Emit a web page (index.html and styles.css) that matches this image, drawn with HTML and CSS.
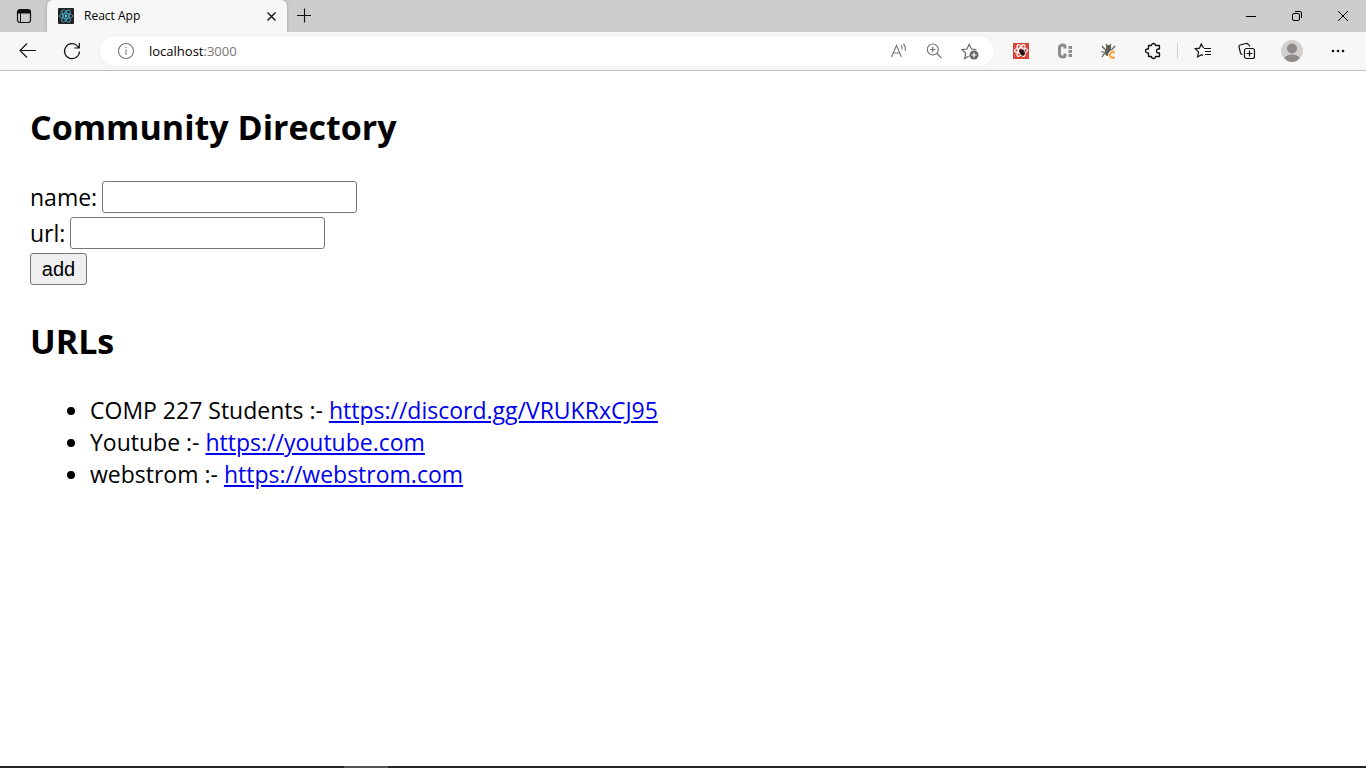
FILE: index.html
```html
<!DOCTYPE html>
<html lang="en">
<head>
<meta charset="utf-8">
<title>React App</title>
<link rel="stylesheet" href="styles.css">
</head>
<body>
<header class="browser">
  <div class="tabs">
    <button class="tab-actions" aria-label="Tab actions">
      <svg width="16" height="16" viewBox="0 0 16 16" fill="none" stroke="#111"><rect x="1.5" y="1.5" width="13" height="13" rx="2.5" stroke-width="1.2"/><path d="M2 3h12M2 4.5h12" stroke-width="2"/><path d="M4.5 5v9"/></svg>
    </button>
    <div class="tab">
      <svg width="16" height="16" viewBox="0 0 16 16" fill="none" stroke="#4fa9c0" stroke-width="0.9"><rect width="16" height="16" rx="1" fill="#222" stroke="none"/><ellipse cx="8" cy="8" rx="6.8" ry="2.6"/><ellipse cx="8" cy="8" rx="6.8" ry="2.6" transform="rotate(60 8 8)"/><ellipse cx="8" cy="8" rx="6.8" ry="2.6" transform="rotate(120 8 8)"/><circle cx="8" cy="8" r="1.3" fill="#61dafb" stroke="none"/></svg>
      <span class="tab-title">React App</span>
      <button class="tab-close" aria-label="Close tab"><svg width="16" height="16" viewBox="0 0 16 16" stroke="#111" stroke-width="1.4"><path d="M4.5 4.5l8 8M12.5 4.5l-8 8"/></svg></button>
    </div>
    <button class="new-tab" aria-label="New tab"><svg width="16" height="16" viewBox="0 0 16 16" stroke="#111" stroke-width="1.1"><path d="M1 7.500h14M8.500 0.500v14"/></svg></button>
    <div class="window-controls">
      <button aria-label="Minimize"><svg width="16" height="16" viewBox="0 0 16 16" stroke="#000"><path d="M3 8.500h10"/></svg></button>
      <button aria-label="Restore"><svg width="16" height="16" viewBox="0 0 16 16" fill="none" stroke="#000"><rect x="3.500" y="5.500" width="7" height="7" rx="1.500"/><path d="M6 3.500h5q1.500 0 1.500 1.500v5"/></svg></button>
      <button aria-label="Close"><svg width="16" height="16" viewBox="0 0 16 16" stroke="#000"><path d="M3 3l10 10M13 3L3 13"/></svg></button>
    </div>
  </div>
  <div class="toolbar">
    <button class="nav" aria-label="Back"><svg width="20" height="20" viewBox="0 0 20 20" fill="none" stroke="#111" stroke-width="1.1"><path d="M18 9.500H2.500M9 2.500l-7 7 7 7"/></svg></button>
    <button class="nav" aria-label="Refresh"><svg width="20" height="20" viewBox="0 0 20 20" fill="none" stroke="#111" stroke-width="1.200"><path d="M17.500 10.500a7.500 7.500 0 1 1-1.800-5.200l1.100 1.200M17.300 2v5h-5"/></svg></button>
    <div class="address">
      <svg width="18" height="18" viewBox="0 0 18 18" fill="none" stroke="#767676" stroke-width="1.100"><circle cx="9" cy="9" r="7.500"/><path d="M9 7.500v5.500M9 5v1.300"/></svg>
      <span class="url">localhost<span class="port">:3000</span></span>
      <button aria-label="Read aloud"><svg width="18" height="18" viewBox="0 0 18 18" fill="none" stroke="#767676" stroke-width="1.100"><path d="M1.500 15L6.500 3.500l5 11.500M3.200 11h6.600M11 3.500q1.500 1.500 1 4M13.500 2q2.800 3 1.500 7"/></svg></button>
      <button aria-label="Zoom"><svg width="18" height="18" viewBox="0 0 18 18" fill="none" stroke="#767676" stroke-width="1.200"><circle cx="7.800" cy="7.500" r="5.500"/><path d="M12 11.500l4.500 4.500M5 7.500h5.600M7.800 4.700v5.600"/></svg></button>
      <button aria-label="Add to favorites"><svg width="20" height="20" viewBox="0 0 20 20" fill="none" stroke="#666" stroke-width="1.200"><path d="M9 15l-4.300 2.500 1-5.200L2 8.700l5-.7 2.200-4.700L11.500 8l5 .7"/><circle cx="14" cy="14" r="4.500" fill="#666" stroke="none"/><path d="M11.500 14h5M14 11.500v5" stroke="#fff"/></svg></button>
    </div>
    <div class="tools">
      <button aria-label="React tools"><svg width="16" height="16" viewBox="0 0 16 16" fill="none" stroke="#fff" stroke-width="1.200"><rect width="16" height="16" fill="#dc4437" stroke="none"/><ellipse cx="8" cy="7.500" rx="6.500" ry="2.500"/><ellipse cx="8" cy="7.500" rx="6.500" ry="2.500" transform="rotate(60 8 7.500)"/><ellipse cx="8" cy="7.500" rx="6.500" ry="2.500" transform="rotate(120 8 7.500)"/><ellipse cx="9" cy="9.500" rx="2" ry="3.500" transform="rotate(-35 9 9.500)" fill="#24130f" stroke="none"/><path d="M7 9l4-2M8 12l4-3" stroke="#24130f"/></svg></button>
      <button aria-label="Colon extension"><svg width="16" height="16" viewBox="0 0 16 16" fill="none" stroke="#8c8c8c"><path d="M8 5.500V4a2 2 0 0 0-2-2h-.500a3 3 0 0 0-3 3v6a3 3 0 0 0 3 3H6a2 2 0 0 0 2-2v-1.500" stroke-width="3"/><path d="M11.500 4.500h3.500M11.500 8.500h3.500M11.500 12.500h3.500" stroke-width="2.800"/></svg></button>
      <button aria-label="Bug extension"><svg width="16" height="16" viewBox="0 0 16 16" fill="none" stroke="#5e5951" stroke-width="1.200"><path d="M5 1l1.500 2.500M10 1L8.500 3.500M1 3l2.500 3L6 7M14 3l-2.500 3L9 7M0 9h5M1 14l2-3 2-1M10 8h4"/><circle cx="7.500" cy="4.500" r="2" fill="#5e5951"/><ellipse cx="7" cy="9" rx="3" ry="4" fill="#5e5951" stroke="none"/><path d="M13.500 10a2.700 2.700 0 1 0 0 4" stroke="#f6f6f6" stroke-width="4"/><path d="M13.500 10a2.700 2.700 0 1 0 0 4" stroke="#ff981f" stroke-width="1.700"/></svg></button>
      <button aria-label="Extensions"><svg width="18" height="18" viewBox="0 0 18 18" fill="none" stroke="#111" stroke-width="1.300" stroke-linejoin="round"><path d="M4.500 3.500h3a2 2 0 0 1 4 0H15.500V7h-1a2 2 0 0 0 0 4h1v3.500h-4a2 2 0 0 1-4 0h-3V11h-1a2 2 0 0 1 0-4h1z"/></svg></button>
      <button class="divided" aria-label="Favorites"><svg width="18" height="18" viewBox="0 0 18 18" fill="none" stroke="#111" stroke-width="1.200"><path d="M9.500 6L7.200 2 5.500 6.200l-4.200.5 3.200 3.200-.8 5 3.800-2.200 1.500.8M10 6.500h7M11 9.500h6M11 12.500h6"/></svg></button>
      <button aria-label="Collections"><svg width="18" height="18" viewBox="0 0 18 18" fill="none" stroke="#111" stroke-width="1.200"><rect x="6.500" y="6.500" width="10" height="10" rx="2"/><path d="M11.500 8.500v6M8.500 11.500h6M4.500 12.500q-1.500 0-2-1.500L1 5q-.3-1.500 1-2l6-1.500q1.500-.3 2.300.8l1.700 2"/></svg></button>
      <button class="wide" aria-label="Profile"><svg width="22" height="22" viewBox="0 0 22 22" fill="#8d8a87"><circle cx="11" cy="11" r="11" fill="#d3d1cf"/><circle cx="11" cy="8.500" r="5"/><path d="M3.500 18q2-3.500 7.500-3.500t7.500 3.500Q15.500 22 11 22t-7.500-4z"/></svg></button>
      <button class="wide" aria-label="Settings and more"><svg width="16" height="16" viewBox="0 0 16 16" fill="#111"><circle cx="3" cy="8" r="1.300"/><circle cx="8" cy="8" r="1.300"/><circle cx="13" cy="8" r="1.300"/></svg></button>
    </div>
  </div>
</header>
<main class="page">
  <h2 class="heading">Community Directory</h2>
  <form class="entry">
    <div class="field"><label for="name">name:</label><input id="name" type="text"></div>
    <div class="field"><label for="url">url:</label><input id="url" type="text"></div>
    <button class="add" type="button">add</button>
  </form>
  <h2 class="heading">URLs</h2>
  <ul class="links">
    <li>COMP 227 Students :- <a href="https://discord.gg/VRUKRxCJ95">https://discord.gg/VRUKRxCJ95</a></li>
    <li>Youtube :- <a href="https://youtube.com">https://youtube.com</a></li>
    <li>webstrom :- <a href="https://webstrom.com">https://webstrom.com</a></li>
  </ul>
</main>
<footer class="taskbar"></footer>
</body>
</html>
```
FILE: styles.css
```css
* { box-sizing: border-box; }
body {
  margin: 0;
  min-height: 100vh;
  display: flex;
  flex-direction: column;
  background: #fff;
  color: #000;
  font-family: "Open Sans", "Noto Sans", sans-serif;
}
svg { display: block; flex: none; }
.browser { font-size: 12px; }
.browser button {
  display: flex;
  align-items: center;
  justify-content: center;
  padding: 0;
  border: 0;
  background: none;
}
.tabs {
  display: flex;
  height: 32px;
  background: #cdcdcd;
}
.tab-actions { width: 47px; }
.tab {
  display: flex;
  align-items: center;
  gap: 10px;
  width: 240px;
  padding: 0 8px 0 11px;
  background: #f7f7f7;
  border-radius: 6px 6px 0 0;
  box-shadow: 0 0 3px #999;
}
.tab-title { flex: 1; font-size: 12px; line-height: 16px; }
.new-tab { width: 34px; }
.window-controls { display: flex; margin-left: auto; }
.window-controls button { width: 46px; }
.toolbar {
  position: relative;
  display: flex;
  align-items: center;
  height: 39px;
  padding-left: 6px;
  background: #f7f7f7;
  border-bottom: 1px solid #bfbfbf;
}
.nav { width: 44px; height: 32px; }
.address {
  flex: 1;
  display: flex;
  align-items: center;
  gap: 17px;
  height: 30px;
  margin-left: 6px;
  padding: 0 14px 0 17px;
  border-radius: 15px;
  background: #fff;
  box-shadow: 0 0 3px #e8e8e8;
}
.url { flex: 1; margin-left: -3px; font-size: 13px; }
.port { color: #767676; }
.tools { display: flex; margin: 0 5px; }
.tools button { width: 44px; height: 32px; }
.tools .wide { width: 46px; }
.tools .divided {
  width: 50px;
  padding-left: 6px;
  background: linear-gradient(#cfcfcf, #cfcfcf) 2px center / 1px 16px no-repeat;
}
.page {
  flex: 1;
  padding: 29px 30px;
  font-size: 23px;
  line-height: 32px;
}
.heading {
  margin: 0;
  font-size: 34px;
  line-height: 54px;
}
.entry {
  display: flex;
  flex-direction: column;
  align-items: flex-start;
  gap: 4px;
  margin: 27px 0 29px;
}
.field { display: flex; align-items: center; gap: 5px; height: 32px; }
.field input {
  width: 255px;
  height: 32px;
  padding: 2px 4px;
  border: 1px solid #767676;
  border-radius: 3px;
  background: #fff;
  font: 20px "Liberation Sans", sans-serif;
}
.add {
  width: 57px;
  height: 32px;
  padding: 0;
  border: 1px solid #767676;
  border-radius: 3px;
  background: #efefef;
  color: #000;
  font: 20px "Liberation Sans", sans-serif;
}
.links { margin: 26px 0 0; padding-left: 60px; }
.links a { color: #00e; }
.taskbar { height: 2px; background: linear-gradient(#555, #555) 344px 0 / 44px 2px no-repeat #252527; }
```
